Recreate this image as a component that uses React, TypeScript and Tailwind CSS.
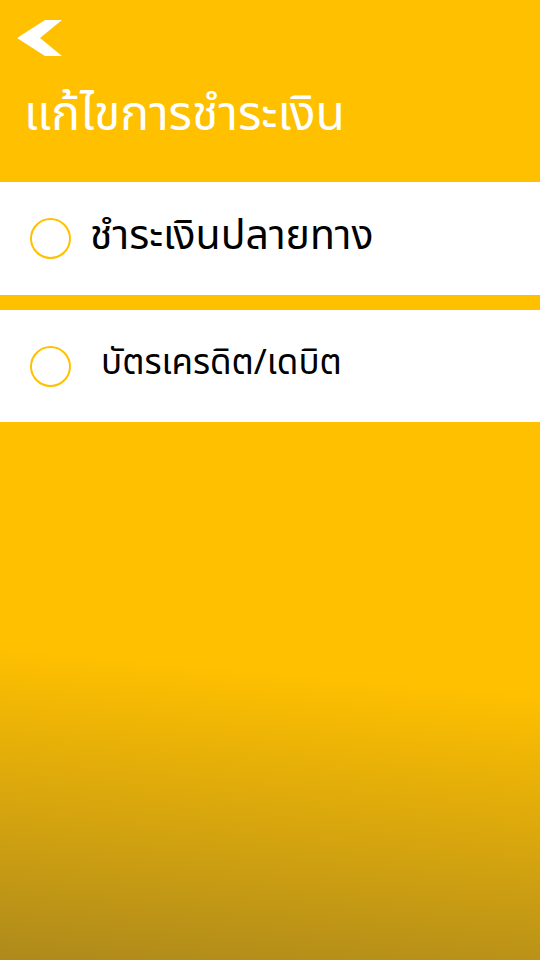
import React from "react";

const thai = { fontFamily: '"Noto Sans Thai", "Noto Sans", "DejaVu Sans", sans-serif' };

export default function App() {
  return (
    <div
      className="w-[540px] h-[960px] flex flex-col bg-[linear-gradient(185deg,#FFC000_0%,#FFC000_69%,#AE8A1C_100%)]"
      style={thai}
    >
      <div className="h-[182px] flex flex-col">
        <div className="pl-[17px] pt-[20px] h-[56px]">
          <svg width="46" height="37" viewBox="0 0 46 37">
            <polygon points="0,18 28,0 45,0 23,18 45,36 28,36" fill="#ffffff" />
          </svg>
        </div>
        <div className="pl-[24px] pt-[36px] text-white text-[48px] leading-none">แก้ไขการชำระเงิน</div>
      </div>
      <div className="h-[113px] bg-white flex items-center">
        <div className="ml-[30px] w-[41px] h-[41px] rounded-full border-2 border-[#FFC000]" />
        <div className="ml-[19px] text-black text-[41px] leading-none -mt-[4px]">ชำระเงินปลายทาง</div>
      </div>
      <div className="h-[15px]" />
      <div className="h-[112px] bg-white flex items-center">
        <div className="ml-[30px] w-[41px] h-[41px] rounded-full border-2 border-[#FFC000]" />
        <div className="ml-[30px] text-black text-[35px] leading-none -mt-[6px]">บัตรเครดิต/เดบิต</div>
      </div>
    </div>
  );
}
